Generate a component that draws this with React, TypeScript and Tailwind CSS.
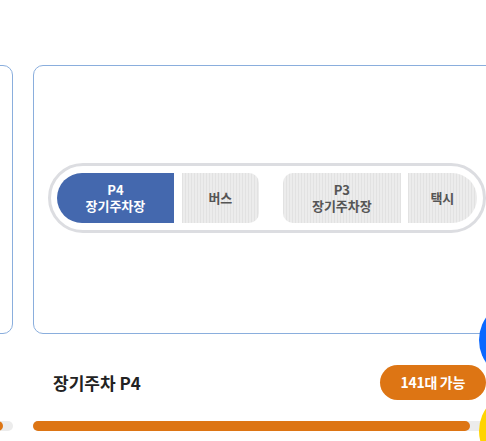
import React from "react";

const font = { fontFamily: '"Noto Sans CJK KR", "Noto Sans", sans-serif' };

const stripe =
  "bg-[#ececec] bg-[repeating-linear-gradient(90deg,#e2e2e2_0px,#e2e2e2_1px,transparent_1px,transparent_3px)]";

function Pill() {
  return (
    <div className="flex w-[438px] h-[70px] items-center rounded-full border-[3px] border-[#dcdde1] bg-white px-[6px]">
      <div className="flex h-[50px] w-[118px] items-center justify-center rounded-l-full bg-[#4468ae] text-center text-[13px] font-bold leading-[16px] text-white">
        <p>
          P4
          <br />
          장기주차장
        </p>
      </div>
      <div
        className={`ml-[8px] flex h-[50px] w-[78px] items-center justify-center rounded-r-[10px] text-[13px] font-semibold text-[#555] ${stripe}`}
      >
        버스
      </div>
      <div
        className={`ml-[24px] flex h-[50px] w-[119px] items-center justify-center rounded-l-[10px] text-center text-[13px] font-semibold leading-[16px] text-[#555] ${stripe}`}
      >
        <p>
          P3
          <br />
          장기주차장
        </p>
      </div>
      <div
        className={`ml-[7px] flex h-[50px] w-[70px] items-center justify-center rounded-r-full text-[13px] font-semibold text-[#555] ${stripe}`}
      >
        택시
      </div>
    </div>
  );
}

function Slide({ title, count, fill, showContent }: { title: string; count: string; fill: number; showContent: boolean }) {
  return (
    <div className="flex w-[470px] shrink-0 flex-col pt-[65px]">
      <div className="flex h-[269px] items-center rounded-[10px] border border-[#8aaedd] px-[14px]">
        {showContent && (
          <div className="-mt-[3px]">
            <Pill />
          </div>
        )}
      </div>
      <div className="mt-[31px] flex h-[35px] items-center justify-between pl-[20px] pr-[17px]">
        {showContent && (
          <>
            <span className="text-[17px] font-bold text-[#222]">{title}</span>
            <span className="flex h-[35px] items-center rounded-full bg-[#dd7514] px-[21px] text-[14px] font-bold tracking-[-0.3px] text-white">
              {count}
            </span>
          </>
        )}
      </div>
      <div className="mt-[21px] h-[10px] w-full rounded-full bg-[#ececec]">
        <div className="h-full rounded-full bg-[#dd7514]" style={{ width: `${fill}px` }} />
      </div>
    </div>
  );
}

export default function App() {
  return (
    <div className="relative h-[441px] w-[486px] overflow-hidden bg-white" style={font}>
      <div className="ml-[-457px] flex gap-[20px]">
        <Slide title="장기주차 P3" count="120대 가능" fill={460} showContent={false} />
        <Slide title="장기주차 P4" count="141대 가능" fill={437} showContent={true} />
      </div>
      <div className="absolute left-[479px] top-[300px] flex flex-col gap-[11px]">
        <div className="h-[80px] w-[80px] rounded-full bg-[#0a68ff]" />
        <div className="h-[80px] w-[80px] rounded-full bg-[#ffd400]" />
      </div>
    </div>
  );
}
